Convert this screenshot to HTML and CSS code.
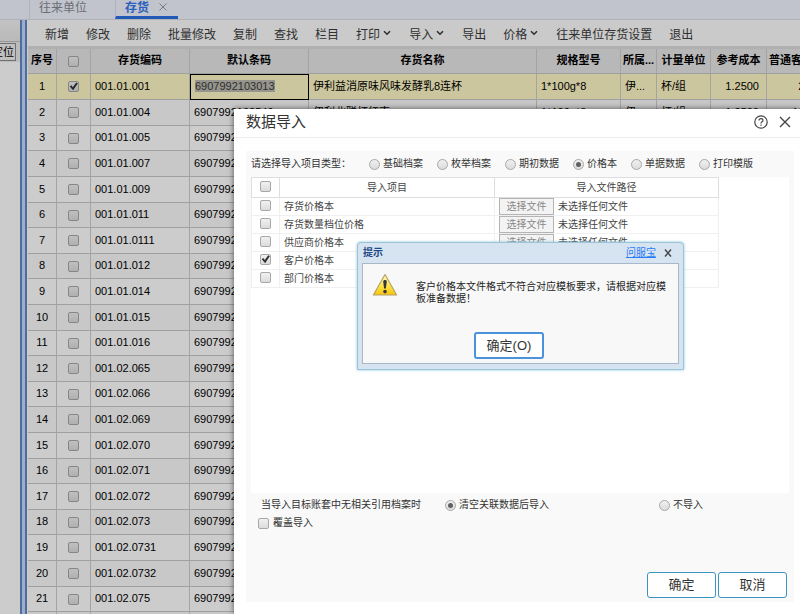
FILE: index.html
```html
<!DOCTYPE html>
<html lang="zh-CN">
<head>
    <meta charset="UTF-8">
    <meta name="viewport" content="width=device-width, initial-scale=1.0">
    <title>存货</title>
    <link rel="stylesheet" href="styles.css">
</head>
<body>
    <div class="app">
        <nav class="tabs">
            <a class="tab" href="#">往来单位</a>
            <a class="tab active" href="#">存货
                <svg class="tab-close" viewBox="0 0 8 8"><path d="M0.5 0.5L7.5 7.5M7.5 0.5L0.5 7.5"/></svg>
            </a>
        </nav>
        <div class="workspace">
            <aside class="sidebar">
                <div class="sidebar-head"></div>
                <div class="sidebar-tools"><button type="button" class="locate">定位</button></div>
            </aside>
            <div class="splitter"></div>
            <main class="main">
                <div class="toolbar">
                    <button type="button">新增</button>
                    <button type="button">修改</button>
                    <button type="button">删除</button>
                    <button type="button">批量修改</button>
                    <button type="button">复制</button>
                    <button type="button">查找</button>
                    <button type="button">栏目</button>
                    <button type="button">打印<svg class="caret" viewBox="0 0 8 6"><path d="M1 1.2L4 4.2L7 1.2"/></svg></button>
                    <button type="button">导入<svg class="caret" viewBox="0 0 8 6"><path d="M1 1.2L4 4.2L7 1.2"/></svg></button>
                    <button type="button">导出</button>
                    <button type="button">价格<svg class="caret" viewBox="0 0 8 6"><path d="M1 1.2L4 4.2L7 1.2"/></svg></button>
                    <button type="button">往来单位存货设置</button>
                    <button type="button">退出</button>
                </div>
                <table class="grid">
                    <colgroup>
                        <col class="c-no"><col class="c-check"><col class="c-code"><col class="c-bar"><col class="c-name">
                        <col class="c-spec"><col class="c-own"><col class="c-unit"><col class="c-cost"><col class="c-price">
                    </colgroup>
                    <thead>
                        <tr>
                            <th>序号</th>
                            <th><input type="checkbox" class="box" aria-label="全选"></th>
                            <th>存货编码</th>
                            <th>默认条码</th>
                            <th>存货名称</th>
                            <th>规格型号</th>
                            <th>所属...</th>
                            <th>计量单位</th>
                            <th>参考成本</th>
                            <th class="left">普通客户价</th>
                        </tr>
                    </thead>
                    <tbody id="stock-rows"></tbody>
                </table>
            </main>
        </div>
    </div>

    <div class="mask"></div>

    <section class="dialog" role="dialog" aria-label="数据导入">
        <header class="dialog-head">
            <h1>数据导入</h1>
            <button type="button" class="icon-btn" aria-label="帮助">
                <svg class="help-icon" viewBox="0 0 14 14"><circle cx="7" cy="7" r="6.2"/><path d="M5 5.6C5 4.3 5.9 3.6 7 3.6S9 4.3 9 5.4C9 6.8 7 6.8 7 8.4"/><path d="M7 9.6V10.8"/></svg>
            </button>
            <button type="button" class="icon-btn" aria-label="关闭">
                <svg class="close-icon" viewBox="0 0 12 12"><path d="M1 1L11 11M11 1L1 11"/></svg>
            </button>
        </header>
        <div class="dialog-body">
            <div class="types">
                <span class="types-title">请选择导入项目类型：</span>
                <label><input type="radio" name="type" class="dot">基础档案</label>
                <label><input type="radio" name="type" class="dot">枚举档案</label>
                <label><input type="radio" name="type" class="dot">期初数据</label>
                <label><input type="radio" name="type" class="dot" checked>价格本</label>
                <label><input type="radio" name="type" class="dot">单据数据</label>
                <label><input type="radio" name="type" class="dot">打印模版</label>
            </div>
            <div class="files">
                <table class="file-table">
                    <thead>
                        <tr>
                            <th class="f-check"><input type="checkbox" class="box" aria-label="全选"></th>
                            <th class="f-item">导入项目</th>
                            <th class="f-path">导入文件路径</th>
                        </tr>
                    </thead>
                    <tbody>
                        <tr>
                            <td><input type="checkbox" class="box" id="f1"></td>
                            <td><label for="f1">存货价格本</label></td>
                            <td><button type="button" class="choose" disabled>选择文件</button>未选择任何文件</td>
                        </tr>
                        <tr>
                            <td><input type="checkbox" class="box" id="f2"></td>
                            <td><label for="f2">存货数量档位价格</label></td>
                            <td><button type="button" class="choose" disabled>选择文件</button>未选择任何文件</td>
                        </tr>
                        <tr>
                            <td><input type="checkbox" class="box" id="f3"></td>
                            <td><label for="f3">供应商价格本</label></td>
                            <td><button type="button" class="choose" disabled>选择文件</button>未选择任何文件</td>
                        </tr>
                        <tr>
                            <td><input type="checkbox" class="box" id="f4" checked></td>
                            <td><label for="f4">客户价格本</label></td>
                            <td></td>
                        </tr>
                        <tr>
                            <td><input type="checkbox" class="box" id="f5"></td>
                            <td><label for="f5">部门价格本</label></td>
                            <td></td>
                        </tr>
                    </tbody>
                </table>
            </div>
            <div class="options">
                <span class="options-title">当导入目标账套中无相关引用档案时</span>
                <label class="opt-clear"><input type="radio" name="missing" class="dot" checked>清空关联数据后导入</label>
                <label class="opt-skip"><input type="radio" name="missing" class="dot">不导入</label>
            </div>
            <label class="cover"><input type="checkbox" class="box">覆盖导入</label>
            <footer class="actions">
                <button type="button" class="btn">确定</button>
                <button type="button" class="btn">取消</button>
            </footer>
        </div>
    </section>

    <section class="alert" role="alertdialog" aria-label="提示">
        <header class="alert-head">
            <h2>提示</h2>
            <a href="#">问服宝</a>
            <button type="button" class="icon-btn" aria-label="关闭">
                <svg class="alert-close" viewBox="0 0 8 8"><path d="M1 0.5L7 7.5M7 0.5L1 7.5"/></svg>
            </button>
        </header>
        <div class="alert-body">
            <div class="alert-msg">
                <svg class="warn" viewBox="0 0 26 24">
                    <defs>
                        <linearGradient id="amber" x1="0" y1="0" x2="0" y2="1">
                            <stop offset="0" stop-color="#fffbd0"/>
                            <stop offset="0.6" stop-color="#ffe23c"/>
                            <stop offset="1" stop-color="#f5c211"/>
                        </linearGradient>
                    </defs>
                    <path d="M13 1.5L24.6 22H1.4Z" fill="url(#amber)" stroke="#b5a264" stroke-width="1.2" stroke-linejoin="round"/>
                    <path d="M11.2 8.6C11.2 6.6 14.8 6.6 14.8 8.6L13.9 15.6H12.1Z" fill="#33373d"/>
                    <circle cx="13" cy="18.6" r="1.8" fill="#33373d"/>
                </svg>
                <p>客户价格本文件格式不符合对应模板要求，请根据对应模板准备数据！</p>
            </div>
            <button type="button" class="btn alert-ok">确定(O)</button>
        </div>
    </section>

    <script src="script.js"></script>
</body>
</html>
```
FILE: styles.css
```css
* {
    box-sizing: border-box;
}

body {
    margin: 0;
    font-family: "Liberation Sans", "Noto Sans CJK SC", sans-serif;
    font-size: 11px;
    line-height: 14px;
    color: #000;
    overflow: hidden;
}

button {
    font-family: inherit;
    cursor: pointer;
}

svg {
    fill: none;
    stroke: currentColor;
    display: block;
}

.app {
    height: 100vh;
    display: flex;
    flex-direction: column;
    overflow: hidden;
    background: #fff;
}

/* top tabs */
.tabs {
    display: flex;
    flex: none;
    height: 20px;
    padding-left: 29px;
    background: #f2f5ff;
    border-bottom: 1px solid #dcdfe6;
}

.tab {
    width: 86px;
    height: 19px;
    padding-left: 9px;
    border-left: 1px solid #dde0ea;
    font-size: 12px;
    line-height: 16px;
    color: #858a94;
    text-decoration: none;
}

.tab.active {
    display: flex;
    gap: 10px;
    width: 63px;
    font-weight: bold;
    color: #3478ee;
    border-bottom: 3px solid #2b70e4;
}

.tab-close {
    width: 8px;
    height: 8px;
    margin-top: 3px;
    color: #9498a0;
}

/* left side */
.workspace {
    flex: 1;
    display: flex;
    min-height: 0;
}

.sidebar {
    width: 20px;
    overflow: hidden;
}

.sidebar-head {
    height: 22px;
    background: linear-gradient(#f4f4f4, #e8e8e8);
    border-bottom: 1px solid #c0c0c0;
}

.sidebar-tools {
    display: flex;
    justify-content: flex-end;
    height: 20px;
    padding: 1px 4px 1px 0;
    background: #ececec;
}

.locate {
    flex: none;
    height: 18px;
    padding: 0 1px 0 4px;
    border: 1px solid #8c8c8c;
    background: #f0f0f0;
    font-size: 11px;
    line-height: 14px;
}

.splitter {
    flex: none;
    width: 7px;
    background: #c4dafa;
    border: solid #6387c8;
    border-width: 0 2px;
}

.main {
    flex: 1;
    min-width: 0;
    padding-left: 1px;
    overflow: hidden;
}

.toolbar {
    display: flex;
    gap: 17px;
    height: 29px;
    padding: 0 0 3px 17px;
    background: #fdfdfd;
    border-bottom: 3px solid #dcdcdc;
    white-space: nowrap;
}

.toolbar button {
    flex: none;
    display: flex;
    align-items: center;
    gap: 2px;
    height: 26px;
    padding: 0;
    border: 0;
    background: none;
    font-size: 12px;
    color: #3c3c3c;
}

.caret {
    width: 10px;
    height: 6px;
    stroke-width: 1.6;
}

/* stock table */
.grid {
    width: 100%;
    min-width: 812px;
    table-layout: fixed;
    border-collapse: separate;
    border-spacing: 0;
}

.c-no { width: 29px; }
.c-check { width: 34px; }
.c-code { width: 99px; }
.c-bar { width: 119px; }
.c-spec { width: 84px; }
.c-own { width: 36px; }
.c-unit { width: 54px; }
.c-cost { width: 56px; }
.c-price { width: 73px; }

.grid th,
.grid td {
    height: 26px;
    padding: 0 4px 2px;
    border-right: 1px solid #cecece;
    border-bottom: 1px solid #c8c8c8;
    overflow: hidden;
    white-space: nowrap;
    text-align: left;
}

.grid th {
    height: 25px;
    padding: 0 0 2px;
    background: #e6e6e6;
    text-align: center;
}

.grid th.left {
    padding-left: 2px;
    text-align: left;
}

.grid tbody tr:nth-child(5n+3) td,
.grid tbody tr:nth-child(5n+6) td {
    height: 25px;
}

.grid tbody tr:nth-child(even) {
    background: #fafafa;
}

.grid tbody tr.selected {
    background: #fff8c6;
}

.grid td.mid {
    padding: 0 0 2px;
    text-align: center;
}

.grid td.num {
    padding-right: 7px;
    text-align: right;
}

.grid tr.selected td.editing {
    border: 1px solid #000;
}

.editing span {
    background: #bcbab0;
    color: #3a3a3a;
}

.box,
.dot {
    appearance: none;
    flex: none;
    width: 11px;
    height: 11px;
    margin: 0;
    border: 1px solid #a8a8a8;
    border-radius: 2px;
    background: linear-gradient(#f0f0f0, #dcdcdc);
    vertical-align: middle;
}

.dot {
    border-radius: 50%;
}

.box:checked::before {
    content: "";
    display: block;
    height: 9px;
    background: #333;
    clip-path: polygon(8% 48%, 26% 36%, 42% 56%, 80% 4%, 98% 16%, 46% 92%);
}

.dot:checked::before {
    content: "";
    display: block;
    width: 5px;
    height: 5px;
    margin: 2px;
    border-radius: 50%;
    background: #606060;
}

.mask {
    position: absolute;
    inset: 0;
    background: rgba(0, 0, 0, 0.2);
}

/* import dialog */
.dialog {
    position: absolute;
    top: 109px;
    right: 0;
    bottom: 0;
    left: 234px;
    display: flex;
    flex-direction: column;
    padding: 0 6px 12px 12px;
    background: #fff;
    box-shadow: 0 0 6px rgba(0, 0, 0, 0.6);
    font-size: 10px;
    color: #333;
}

.dialog-head {
    display: flex;
    align-items: center;
    gap: 11px;
    height: 29px;
    margin: 0 -6px 13px -12px;
    padding: 0 9px 2px 12px;
    border-bottom: 1px solid #ececec;
}

.dialog-head h1 {
    flex: 1;
    margin: 0;
    font-size: 15px;
    font-weight: normal;
    line-height: 20px;
}

.icon-btn {
    padding: 0;
    border: 0;
    background: none;
    color: #444;
}

.help-icon {
    width: 14px;
    height: 14px;
    stroke-width: 1.2;
}

.close-icon {
    width: 12px;
    height: 12px;
    stroke-width: 1.4;
}

.dialog-body {
    flex: 1;
    display: flex;
    flex-direction: column;
    padding: 0 5px 4px;
    background: #f9f9f9;
}

.types {
    display: flex;
    align-items: center;
    gap: 14px;
    height: 26px;
}

.types-title {
    width: 104px;
}

.types label,
.options label,
.cover {
    display: flex;
    align-items: center;
    gap: 3px;
}

.files {
    flex: 1;
    background: #fff;
}

.file-table {
    width: 87%;
    table-layout: fixed;
    border-collapse: collapse;
}

.file-table th,
.file-table td {
    height: 18px;
    padding: 0 4px;
    border: 1px solid #f0f0f0;
    font-weight: normal;
    line-height: 14px;
    text-align: left;
    white-space: nowrap;
    color: #444;
}

.file-table th {
    height: 20px;
    border-color: #dedede;
    text-align: center;
}

.file-table td:first-child {
    padding: 0 0 3px;
    text-align: center;
}

.file-table .f-check {
    width: 28px;
    padding: 0 0 2px;
}

.f-path {
    width: 224px;
}

.choose {
    height: 17px;
    width: 55px;
    margin-right: 4px;
    padding: 0;
    border: 1px solid #b4b4b4;
    background: #f3f3f3;
    font-size: 10px;
    line-height: 14px;
    color: #888;
}

.options {
    display: flex;
    height: 24px;
    padding-left: 10px;
}

.options-title {
    width: 184px;
    line-height: 24px;
}

.opt-clear {
    width: 214px;
}

.cover {
    height: 12px;
    padding-left: 7px;
    gap: 4px;
}

.actions {
    display: flex;
    justify-content: flex-end;
    gap: 2px;
    margin-top: 43px;
    padding-right: 2px;
}

.btn {
    width: 69px;
    height: 26px;
    padding: 0;
    border: 1px solid #3c94c0;
    border-radius: 3px;
    background: #fff;
    font-size: 13px;
    line-height: 20px;
    color: #333;
}

/* message box */
.alert {
    position: absolute;
    top: 242px;
    left: 357px;
    width: 327px;
    padding: 0 4px 5px;
    border: 1px solid #9cc4d8;
    border-radius: 4px 4px 0 0;
    background: #d6e3f0;
    box-shadow: 0 0 3px #8cc4d8;
    font-size: 10px;
    color: #222;
}

.alert-head {
    display: flex;
    align-items: center;
    height: 20px;
    padding: 0 7px 0 1px;
}

.alert-head h2 {
    flex: 1;
    margin: 0;
    font-size: 10px;
    color: #1f4a86;
}

.alert-head a {
    margin-right: 8px;
    color: #2b7cf6;
}

.alert-close {
    width: 8px;
    height: 8px;
    stroke-width: 1.4;
}

.alert-body {
    display: flex;
    flex-direction: column;
    align-items: center;
    justify-content: space-between;
    height: 101px;
    padding: 9px 5px 4px 9px;
    border: 1px solid #a9b8c8;
    background: #f8f8f8;
}

.alert-msg {
    display: flex;
    align-self: stretch;
    gap: 18px;
}

.warn {
    flex: none;
    width: 26px;
    height: 24px;
    stroke: none;
}

.alert-msg p {
    flex: 1;
    margin: 8px 0 0;
    padding-right: 4px;
    line-height: 12px;
}

.alert-ok {
    width: 70px;
    height: 27px;
    margin-right: 27px;
    border: 2px solid #4a92dc;
}
```
FILE: script.js
```js
// code, barcode, name, spec, owner, unit, cost, price
const stock = [
    ["001.01.001", "6907992103013", "伊利益消原味风味发酵乳8连杯", "1*100g*8", "伊...", "杯/组", "1.2500", "2.0000"],
    ["001.01.004", "6907992102549", "伊利北联杯红枣", "1*100g*8", "伊...", "杯/组", "1.2500", "18.9000"],
    ["001.01.005"], ["001.01.007"], ["001.01.009"], ["001.01.011"], ["001.01.0111"],
    ["001.01.012"], ["001.01.014"], ["001.01.015"], ["001.01.016"], ["001.02.065"],
    ["001.02.066"], ["001.02.069"], ["001.02.070"], ["001.02.071"], ["001.02.072"],
    ["001.02.073"], ["001.02.0731"], ["001.02.0732"], ["001.02.075"], ["001.02.076"]
];

const body = document.getElementById("stock-rows");

stock.forEach(function (item, i) {
    const [code, bar = "6907992100000", name = "", spec = "", owner = "", unit = "", cost = "", price = ""] = item;
    const first = i === 0;
    body.insertAdjacentHTML("beforeend", `
        <tr class="${first ? "selected" : ""}">
            <td class="mid">${i + 1}</td>
            <td class="mid"><input type="checkbox" class="box" aria-label="${code}" ${first ? "checked" : ""}></td>
            <td>${code}</td>
            <td class="${first ? "editing" : ""}"><span>${bar}</span></td>
            <td>${name}</td>
            <td>${spec}</td>
            <td>${owner}</td>
            <td>${unit}</td>
            <td class="num">${cost}</td>
            <td class="num">${price}</td>
        </tr>`);
});
```
